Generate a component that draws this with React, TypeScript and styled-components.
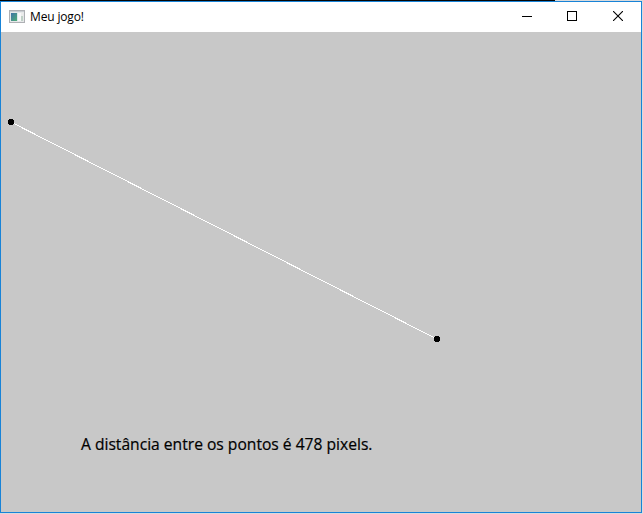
import React from "react";
import styled, { createGlobalStyle } from "styled-components";

const GlobalStyle = createGlobalStyle`
  html, body { margin: 0; padding: 0; background: #dcdcdc; overflow: hidden; }
`;

const Desktop = styled.div`
  width: 643px;
  height: 514px;
  display: flex;
  flex-direction: column;
  background: #d9dbdd;
`;

const Backdrop = styled.div`
  height: 1px;
  width: 555px;
  background: #050505;
`;

const Window = styled.section`
  box-sizing: border-box;
  width: 642px;
  height: 512px;
  border: 1px solid #1883d7;
  display: flex;
  flex-direction: column;
  background: #c8c8c8;
`;

const TitleBar = styled.header`
  height: 30px;
  flex: none;
  display: flex;
  align-items: center;
  background: #fff;
  padding-left: 8px;
`;

const Title = styled.h1`
  margin: 0 auto 0 5px;
  font: 400 12px/16px "Open Sans", "Noto Sans", sans-serif;
  letter-spacing: -0.15px;
  color: #000;
`;

const Controls = styled.div`
  display: flex;
  align-self: flex-start;
  height: 28px;
`;

const ControlButton = styled.button<{ $width: number }>`
  width: ${(p) => p.$width}px;
  height: 100%;
  padding: 0;
  border: 0;
  background: transparent;
  display: flex;
  align-items: center;
  justify-content: center;
`;

const Icon = styled.svg`
  display: block;
  flex: none;
`;

const Canvas = styled.main`
  flex: 1;
  display: flex;
  flex-direction: column;
`;

const Caption = styled.p`
  margin: 0 0 0 80px;
  font: 400 16px/24px "Open Sans", "Noto Sans", sans-serif;
  color: #000;
  white-space: nowrap;
  -webkit-text-stroke: 0.2px #000;
  transform: scaleX(0.976);
  transform-origin: 0 0;
`;

const points = [
  { x: 10, y: 90 },
  { x: 436, y: 307 },
];

function AppIcon() {
  return (
    <Icon width="16" height="16" viewBox="0 0 16 16" shapeRendering="crispEdges">
      <defs>
        <linearGradient id="screen" x1="0" y1="0" x2="1" y2="1">
          <stop offset="0" stopColor="#3f72a8" />
          <stop offset="1" stopColor="#4fae75" />
        </linearGradient>
      </defs>
      <rect x="0" y="1" width="16" height="13" fill="#aeb0b4" />
      <rect x="1" y="2" width="14" height="11" fill="#e6e8e9" />
      <rect x="1" y="2" width="14" height="1" fill="#c9cdd2" />
      <rect x="2" y="4" width="6" height="8" fill="url(#screen)" />
      <rect x="8" y="4" width="3" height="8" fill="#dbe7ea" />
      <rect x="9" y="4" width="3" height="8" fill="#f7f8f8" />
      <rect x="12" y="4" width="2" height="8" fill="#bfd0c6" />
      <rect x="12" y="4" width="2" height="3" fill="#ececec" />
    </Icon>
  );
}

export default function App() {
  const [a, b] = points;
  return (
    <>
      <GlobalStyle />
      <Desktop>
        <Backdrop />
        <Window>
          <TitleBar>
            <AppIcon />
            <Title>Meu jogo!</Title>
            <Controls>
              <ControlButton $width={44} aria-label="Minimizar">
                <Icon width="10" height="10" shapeRendering="crispEdges">
                  <rect y="5" width="10" height="1" />
                </Icon>
              </ControlButton>
              <ControlButton $width={46} aria-label="Maximizar">
                <Icon width="10" height="10" shapeRendering="crispEdges">
                  <rect x="0.5" y="0.5" width="9" height="9" fill="none" stroke="#000" />
                </Icon>
              </ControlButton>
              <ControlButton $width={46} aria-label="Fechar">
                <Icon width="10" height="10">
                  <path d="M0 0L10 10M10 0L0 10" stroke="#000" strokeWidth="1.1" />
                </Icon>
              </ControlButton>
            </Controls>
          </TitleBar>
          <Canvas>
            <Icon width="640" height="400" shapeRendering="crispEdges">
              <line x1={a.x + 0.5} y1={a.y + 0.35} x2={b.x + 0.5} y2={b.y + 0.35} stroke="#fff" strokeWidth="1" />
              {points.map((p) => (
                <path
                  key={p.x}
                  d={`M${p.x - 2} ${p.y - 3}h4v1h1v4h-1v1h-4v-1h-1v-4h1z`}
                />
              ))}
            </Icon>
            <Caption>A distância entre os pontos é 478 pixels.</Caption>
          </Canvas>
        </Window>
      </Desktop>
    </>
  );
}
